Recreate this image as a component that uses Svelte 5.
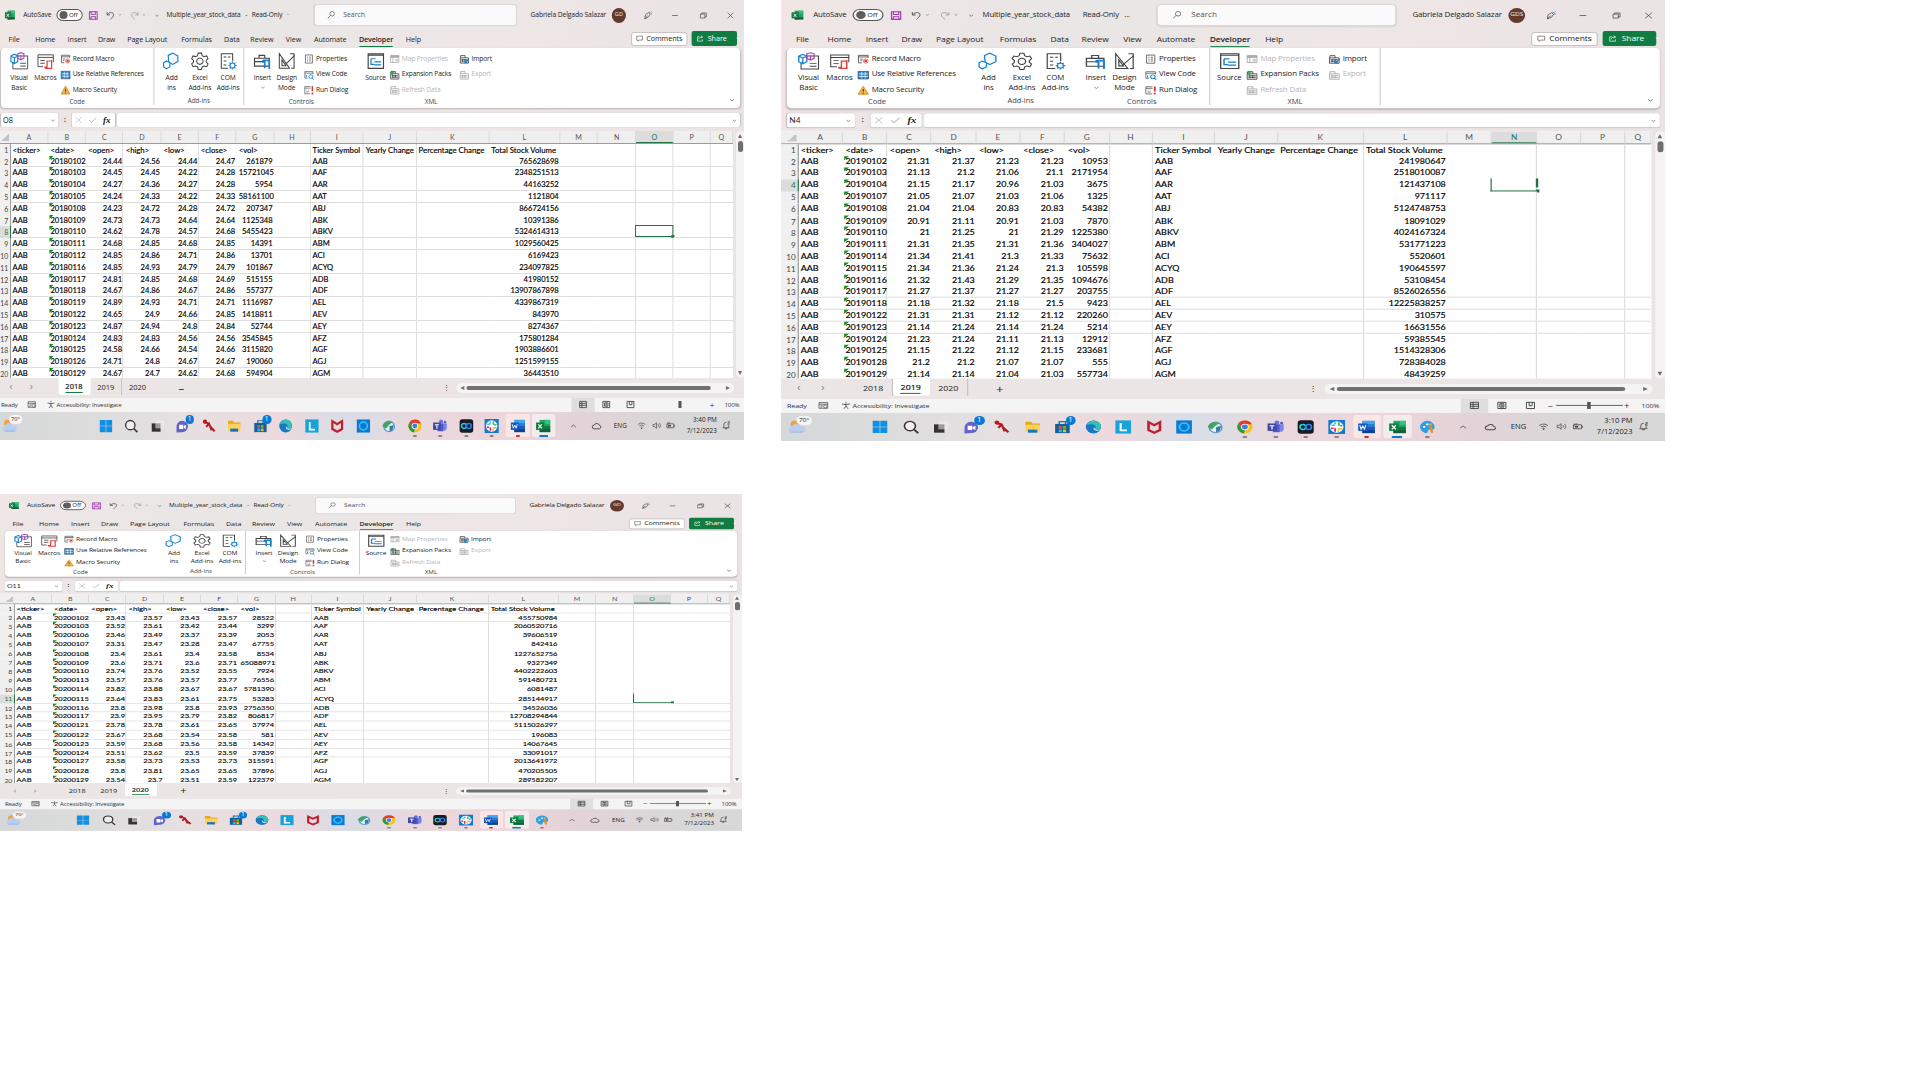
<script>
  const columns = [
    ['A', 37.5], ['B', 37.3], ['C', 37.2], ['D', 37.5], ['E', 37], ['F', 37.5], ['G', 37.1], ['H', 36.1],
    ['I', 52.6], ['J', 52.4], ['K', 72], ['L', 70.3], ['M', 37.3], ['N', 38], ['O', 36.7], ['P', 37], ['Q', 22]
  ].map(([name, width]) => ({ name, width }));
  const template = '14.5px ' + columns.map((c) => c.width + 'px').join(' ');

  const heads = ['<ticker>', '<date>', '<open>', '<high>', '<low>', '<close>', '<vol>', '', 'Ticker Symbol', 'Yearly Change', 'Percentage Change', 'Total Stock Volume'];

  const sheet2018 = `20180102 24.44 24.56 24.44 24.47 261879 AAB 765628698
20180103 24.45 24.45 24.22 24.28 15721045 AAF 2348251513
20180104 24.27 24.36 24.27 24.28 5954 AAR 44163252
20180105 24.24 24.33 24.22 24.33 58161100 AAT 1121804
20180108 24.23 24.72 24.28 24.72 207347 ABJ 866724156
20180109 24.73 24.73 24.64 24.64 1125348 ABK 10391386
20180110 24.62 24.78 24.57 24.68 5455423 ABKV 5324614313
20180111 24.68 24.85 24.68 24.85 14391 ABM 1029560425
20180112 24.85 24.86 24.71 24.86 13701 ACI 6169423
20180116 24.85 24.93 24.79 24.79 101867 ACYQ 234097825
20180117 24.81 24.85 24.68 24.69 515155 ADB 41980152
20180118 24.67 24.86 24.67 24.86 557377 ADF 13907867898
20180119 24.89 24.93 24.71 24.71 1116987 AEL 4339867319
20180122 24.65 24.9 24.66 24.85 1418811 AEV 843970
20180123 24.87 24.94 24.8 24.84 52744 AEY 8274367
20180124 24.83 24.83 24.56 24.56 3545845 AFZ 175801284
20180125 24.58 24.66 24.54 24.66 3115820 AGF 1903886601
20180126 24.71 24.8 24.67 24.67 190060 AGJ 1251599155
20180129 24.67 24.7 24.62 24.68 594904 AGM 36443510`;

  const sheet2019 = `20190102 21.31 21.37 21.23 21.23 10953 AAB 241980647
20190103 21.13 21.2 21.06 21.1 2171954 AAF 2518010087
20190104 21.15 21.17 20.96 21.03 3675 AAR 121437108
20190107 21.05 21.07 21.03 21.06 1325 AAT 971117
20190108 21.04 21.04 20.83 20.83 54382 ABJ 5124748753
20190109 20.91 21.11 20.91 21.03 7870 ABK 18091029
20190110 21 21.25 21 21.29 1225380 ABKV 4024167324
20190111 21.31 21.35 21.31 21.36 3404027 ABM 531771223
20190114 21.34 21.41 21.3 21.33 75632 ACI 5520601
20190115 21.34 21.36 21.24 21.3 105598 ACYQ 190645597
20190116 21.32 21.43 21.29 21.35 1094676 ADB 53108454
20190117 21.27 21.37 21.27 21.27 203755 ADF 8526026556
20190118 21.18 21.32 21.18 21.5 9423 AEL 12225838257
20190122 21.31 21.31 21.12 21.12 220260 AEV 310575
20190123 21.14 21.24 21.14 21.24 5214 AEY 16631556
20190124 21.23 21.24 21.11 21.13 12912 AFZ 59385545
20190125 21.15 21.22 21.12 21.15 233681 AGF 1514328306
20190128 21.2 21.2 21.07 21.07 555 AGJ 728384028
20190129 21.14 21.14 21.04 21.03 557734 AGM 48439259`;

  const sheet2020 = `20200102 23.43 23.57 23.43 23.57 28522 AAB 455750984
20200103 23.52 23.61 23.42 23.44 3299 AAF 2060520716
20200106 23.46 23.49 23.37 23.39 2053 AAR 39606519
20200107 23.31 23.47 23.28 23.47 67755 AAT 842416
20200108 23.4 23.61 23.4 23.58 8534 ABJ 1227652756
20200109 23.6 23.71 23.6 23.71 65088971 ABK 9327349
20200110 23.74 23.76 23.52 23.55 7924 ABKV 4402222603
20200113 23.57 23.76 23.57 23.77 76556 ABM 591480721
20200114 23.82 23.88 23.67 23.67 5781390 ACI 6081487
20200115 23.64 23.83 23.61 23.75 53283 ACYQ 285144917
20200116 23.8 23.98 23.8 23.93 2756350 ADB 34526036
20200117 23.9 23.95 23.79 23.82 806817 ADF 12708294844
20200121 23.78 23.78 23.61 23.65 37974 AEL 5115026297
20200122 23.67 23.68 23.54 23.58 581 AEV 196083
20200123 23.59 23.68 23.56 23.58 14342 AEY 14067645
20200124 23.51 23.62 23.5 23.59 37839 AFZ 33091017
20200127 23.58 23.73 23.53 23.73 315591 AGF 2013641972
20200128 23.8 23.81 23.65 23.65 37896 AGJ 470205505
20200129 23.54 23.7 23.51 23.59 122379 AGM 289582207`;

  const parse = (text) =>
    text.split('\n').map((line) => {
      const [date, open, high, low, close, vol, symbol, total] = line.split(' ');
      return ['AAB', date, open, high, low, close, vol, '', symbol, '', '', total];
    });

  const apps = ['start', 'search', 'taskview', 'chat', 'reader', 'folder', 'store', 'edge', 'lapp', 'shield', 'ring', 'globe', 'chrome', 'teams', 'webex', 'slack', 'word', 'excel'];

  const windows = [
    {
      id: 'w2018', width: 744, height: 440, sx: 1.0097, sy: 1, dx: -4.1, active: '2018', cell: 'O8', selCol: 'O', selRow: 8, box: 'full',
      rows: parse(sheet2018), v: 'CEHIJNOP', h: [2, 4, 5, 8, 9, 11, 13, 15, 16, 19], seps: [0, 1], avatar: 'GD',
      apps, time: '3:40 PM', add: '–', dividers: ['2019'], slider: false, dash: '-', shortTail: '·'
    },
    {
      id: 'w2019', width: 884, height: 441, sx: 1.1925, sy: 1.0023, dx: 0, active: '2019', cell: 'N4', selCol: 'N', selRow: 4, box: 'open',
      rows: parse(sheet2019), v: 'BGHKNP', h: [13, 14, 15, 16], seps: [2, 3], avatar: 'GDS',
      apps: [...apps, 'paint'], time: '3:10 PM', add: '+', dividers: ['2018', '2020'], slider: true, dash: ' ', shortTail: '...'
    },
    {
      id: 'w2020', width: 742, height: 337, sx: 1, sy: 0.7655, dx: 0, active: '2020', cell: 'O11', selCol: 'O', selRow: 11, box: 'ell',
      rows: parse(sheet2020), v: 'CGHIKMN', h: [1, 2, 11, 12, 13, 14, 15, 16, 17], seps: [1, 2], avatar: 'GD',
      apps: [...apps, 'paint'], time: '3:41 PM', add: '+', dividers: [], slider: true, dash: '-', shortTail: '·'
    }
  ];

  const tabs = [
    ['File', 26.5], ['Home', 32], ['Insert', 30], ['Draw', 29], ['Page Layout', 53.5], ['Formulas', 42.5], ['Data', 26],
    ['Review', 35], ['View', 28], ['Automate', 44.5], ['Developer', 46.5], ['Help', 30]
  ];

  const groups = [
    {
      label: 'Code', cls: 'g-code',
      big: [['vb', 'Visual', 'Basic'], ['macros', 'Macros', '']],
      lists: [[['record', 'Record Macro'], ['relref', 'Use Relative References'], ['warn', 'Macro Security']]]
    },
    { label: 'Add-ins', cls: 'g-addins', big: [['hex', 'Add', 'ins'], ['gear', 'Excel', 'Add-ins'], ['com', 'COM', 'Add-ins']], lists: [] },
    {
      label: 'Controls', cls: 'g-controls',
      big: [['toolbox', 'Insert', '⌄'], ['design', 'Design', 'Mode']],
      lists: [[['props', 'Properties'], ['code', 'View Code'], ['run', 'Run Dialog']]]
    },
    {
      label: 'XML', cls: 'g-xml', big: [['source', 'Source', '']],
      lists: [
        [['map', 'Map Properties', 1], ['pack', 'Expansion Packs'], ['refresh', 'Refresh Data', 1]],
        [['import', 'Import'], ['export', 'Export', 1]]
      ]
    }
  ];

  const s = (color, d, w = 1) => `<path d="${d}" fill="none" stroke="${color}" stroke-width="${w}"/>`;
  const f = (color, d) => `<path d="${d}" fill="${color}"/>`;
  const dark = '#444', blue = '#1683d0', gray = '#aaa';
  const pack = (c, extra) => s(c, 'M2 6V2.5h7V6M1.500 6h13v8.500h-13zM3 9h10M3 11.500h10M5 8v5M9 8v5', 1.3) + extra;

  // Every glyph is drawn in a 16 by 16 box.
  const icons = {
    excelLogo: f('#21a366', 'M4 1h11.500v14H4z') + f('#107c41', 'M4 8h5.800v7H4zM0 4h9v9H0z') + f('#33c481', 'M9.800 1h5.700v4.600H9.800z') + f('#185c37', 'M4 11.500h11.500V15H4z') + f('#107c41', 'M0 4h9v9H0z') + s('#fff', 'M2.500 6l4 5M6.500 6l-4 5', 1.3),
    save: s('#a23bb5', 'M1.200 1.200h13.600v13.600H1.200z', 1.8) + s('#a23bb5', 'M4 1v5h8V1M4 15v-5h8v5', 1.7),
    undo: s(dark, 'M2 2v5h5M2.500 6.500C6 1 14 2 13.500 7c-.3 3-3 5-5.500 8', 1.4),
    redo: s('#999', 'M14 2v5H9M13.500 6.500C10 1 2 2 2.500 7c.3 3 3 5 5.500 8', 1.3),
    magnify: s(dark, 'M14.500 5.500a4.500 4.500 0 1 1-9 0a4.500 4.500 0 1 1 9 0M6.500 9L1.500 14.500', 1.2),
    pen: s(dark, 'M3 14l1-7 5-4 3.500 3-3.500 5zM3 14l5-6', 1.2) + s(blue, 'M11 1l1 2.500M15.500 5.500l-2.500-1M13.500 2.500l1.500-1.500', 1.4),
    min: s(dark, 'M3 8h10', 1.2),
    restore: s(dark, 'M3 5.500h8v7H3zM5.500 5.500v-2h8v7H11', 1.2),
    close: s(dark, 'M3 3l10 10M13 3L3 13', 1.2),
    down: s(dark, 'M3 6l5 4.500L13 6', 1.8),
    comment: s(dark, 'M1.500 2.500h13v9H7l-3 3v-3H1.500z', 1.3),
    share: s('#fff', 'M7 4H2v10h11v-4M5 10c0-4 3-5.500 8-5.500M10 1.500l3.500 3-3.500 3', 1.4),
    vb: s(dark, 'M6 3.500h9.500v11.500h-13V9M9 10h5M9 12.500h5', .8) + s(blue, 'M.8 3.500l3-1.500 3 1.500v5l-3 1.800-3-1.800zM.8 3.500l3 1.800 3-1.800M3.800 5.300V10', 1) + s('#a54bb9', 'M6.800 1.500L9.500.6l2.700.9v4L9.500 7 6.800 5.500zM9.500 3v4', 1),
    macros: s(dark, 'M15 9V2.500H1.500v10.500H6M1.500 4.800H15M3.500 7.500h4M3.500 10h4', .8) + s('#e8403b', 'M13.500 7v7.500H7.500M14 8H9.500v5.500H7', 1.1),
    record: s(dark, 'M6 14H1.500V2h13v4M1.500 4.500h13M4 8h3M4 10.500h2', 1.2) + s('#d9413b', 'M14.500 11a3.300 3.300 0 1 1-6.600 0a3.300 3.300 0 1 1 6.600 0') + '<circle cx="11.200" cy="11" r="2" fill="#d9413b"/>',
    relref: f('#2b88cf', 'M1 2h14v12H1z') + s('#fff', 'M1.500 6h13M1.500 10h13M6 2v12M10.500 2v12') + s('#345', 'M1 2h14v12H1z'),
    warn: f('#f7b548', 'M8 1.500l7 13H1z') + s('#c97813', 'M8 1.500l7 13H1z') + s('#5a3700', 'M8 6v4.500M8 12v1.500', 1.5),
    hex: '<path d="M5 3l4-2 4.500 2.500v5L9 11 5.500 9z" fill="#fafafa" stroke="#1683d0" stroke-width="1"/><path d="M1 9.500L3.500 8l3 1.500v3.500L3.500 15 1 13.200z" fill="#fff" stroke="#1683d0" stroke-width="1"/>',
    gear: s(dark, 'M6.500 1h3l.5 2.200 1.700.9L14 3.500l1.200 2.400-1.600 1.600v1.500l1.600 1.600L14 13l-2.300-.6-1.700.9-.5 2.200h-3L6 13.300l-1.700-.9L2 13 .8 10.600 2.400 9V7.500L.8 5.900 2 3.500l2.300.6L6 3.200z', .9) + s(dark, 'M10.800 8.200a2.800 2.800 0 1 1-5.600 0a2.800 2.800 0 1 1 5.600 0', .9),
    com: s(dark, 'M12 8V1.500H2v13h6M4 4.500h2.500M4 8h2.500M8 4.500h2M4 11.500h2.500', .9) + s(blue, 'M14 12a2.200 2.200 0 1 1-4.400 0a2.200 2.200 0 1 1 4.400 0M11.800 8.500v1.300M11.800 14.200v1.300M8.300 12h1.300M14 12h1.500M9.300 9.500l1 1M13.400 13.500l1 1M14.300 9.500l-1 1M9.300 14.500l1-1', 1),
    toolbox: s(dark, 'M1 5.500h13v7H1zM5 5.500V3h5v2.500M1 8.500h8', 1) + s(blue, 'M8.500 7.500h6M10 7.500v7M14 7v8M8.500 9.500V7', 1.5),
    design: s(dark, 'M1.500 1.500v13h9zM3.800 7v5.200h3.500zM11 1.500h3.500v13H12', .9) + s(dark, 'M15 3l-8 8', .9),
    props: s(dark, 'M2.500 1.500h11v13h-11zM5 5h1.500M8 5h3M5 8h1.500M8 8h3M5 11h1.500M8 11h3', 1.1),
    code: s(dark, 'M1.500 13V2.500h13V7M1.500 5h13M1.500 13H6', 1) + s(blue, 'M14 10.500a3 3 0 1 1-6 0a3 3 0 1 1 6 0M13 13l2.500 2.500M4 8v4', 1.4),
    run: s(dark, 'M10 14H1.500V2.500h9M1.500 5h9M4 8h1M7 8h1M4 11h4', 1) + s('#d9333b', 'M13.500 2v8M13.500 12v3', 2.4),
    source: s(dark, 'M1.500 1.500h13.500v13H1.500zM1.500 2.800h13.500', 1) + s(blue, 'M4 6h4M4 6v5h3M7 8.800h6M7 11.500h6', 1.1),
    map: s(gray, 'M1.500 2.500h13v11h-13zM1.500 5.500h13M5 6v8M9 9h4M9 11h4', 1.3) + f(gray, 'M1 2h14v3H1z'),
    pack: pack(dark, s('#2f9e4f', 'M4 1v7M.5 4.500h7', 1.8)),
    refresh: pack(gray, ''),
    import: pack(dark, s(blue, 'M15 8l-6 6M9 10v4h4', 1.7)),
    export: pack(gray, ''),
    access: s(dark, 'M8 4.500V9l-3 5M8 9l3 5M2 5.500l6 1 6-1M8 1.500v2', 1.3),
    macroRec: s(dark, 'M1.500 3h13v10h-13zM1.500 6h13M4 9h4M4 11h2', 1.2) + '<circle cx="11" cy="10" r="2.500" fill="none" stroke="#444"/>',
    normal: s('#333', 'M2 2.500h12v11H2zM2 6h12M2 9.500h12M6 2.500v11', 1.3),
    layout: s('#333', 'M2 2.500h12v11H2zM5 5h6v6H5zM6.500 7h3M6.500 9h3', 1.4),
    pbreak: s('#333', 'M2 2.500h12v11H2zM6 2.500v6h4.500v-6', 1.4),
    weather: '<circle cx="6" cy="5.500" r="3.800" fill="#f2a044"/>' + f('#b9cdee', 'M3 14.500a3.200 3.200 0 0 1 0-6.200A4.700 4.700 0 0 1 11.600 8a3.300 3.300 0 0 1 1.400 6.500z') + f('#90aee0', 'M2 13.500h12l-1 1H3z'),
    start: f('#1190e3', 'M1 1h6.700v6.700H1zM8.300 1H15v6.700H8.300zM1 8.300h6.700V15H1zM8.300 8.300H15V15H8.300z'),
    search: '<circle cx="7" cy="7" r="5.300" fill="#f4eded" stroke="#333" stroke-width="1.500"/>' + s('#333', 'M11 11l4 4', 1.700),
    taskview: f('#333', 'M1.500 5h10v9.500h-10z') + f('#e8e8e8', 'M6 1.500h9.500v9H6z') + f('#999', 'M6 5h5.500v5.500H6z'),
    chat: f('#6264c8', 'M1 9a6.500 6.500 0 1 1 6.500 6L1 15.500z') + f('#fff', 'M4 6.500h4.500v5H4zM9 8l2.500-1.500v5L9 10z'),
    reader: s('#b5171c', 'M2 3.500L8 5l3 8M8 5L5 9M8.500 7.500L14.500 14', 2.200) + '<circle cx="3.500" cy="3" r="2.300" fill="#c3161c"/>',
    folder: f('#e9a81c', 'M1 2h5.500l1.500 2h7v4H1z') + f('#ffd35a', 'M1 5.500h14V14H1z') + f('#1775c0', 'M3.500 11h9v3.500h-9z'),
    store: f('#155f9c', 'M1 4.500h14V15H1z') + s('#1c76bb', 'M5 4.500V2h6v2.500', 1.400) + f('#f25022', 'M4.500 7H7.500v3h-3z') + f('#7fba00', 'M8.500 7h3v3h-3z') + f('#29b6f6', 'M4.500 11h3v3h-3z') + f('#ffb900', 'M8.500 11h3v3h-3z'),
    edge: '<circle cx="8" cy="8" r="7.300" fill="#1778c6"/>' + f('#35c1b0', 'M1.500 5.500C4-1 14-.5 15.300 7c.3 3.500-3.500 4.500-6 3.200 2-2.200.5-5.200-3-5.200-2 0-3.800.7-4.800.5z') + f('#e9f4f7', 'M9 10.200c2 1.500 4.500.8 5.500 0-1 2-3.500 2.600-5.500 1.300-1.500-1-.8-2.500 0-3.300z'),
    lapp: f('#17a5d8', 'M.5.500h15v15H.5z') + s('#fff', 'M5.500 3.500v8.500h6', 2),
    shield: s('#c0202c', 'M2.500 2.500v9L8 14.500l5.500-3v-9L8 6z', 2.500),
    ring: f('#0a78d4', 'M.5.500h15v15H.5z') + '<circle cx="8" cy="8" r="4.500" fill="none" stroke="#38c3f7" stroke-width="1.800"/>',
    globe: '<circle cx="8.500" cy="8.500" r="6" fill="#e4f1f4" stroke="#5ea1c4" stroke-width="1.500"/>' + f('#44a362', 'M1 8c1-5 7-7 11-4L8 7l-3 4z') + f('#317ba8', 'M9 8l5-1-2 6-3 1z'),
    chrome: '<circle cx="8" cy="8" r="7.400" fill="#fbc116"/>' + f('#e33b2e', 'M1.600 4.300A7.400 7.400 0 0 1 14.800 5H8l-3 4z') + f('#279847', 'M1.600 4.300L5.500 10 8 11.500 7 15.300A7.400 7.400 0 0 1 1.600 4.300z') + '<circle cx="8" cy="8" r="3.600" fill="#fff"/><circle cx="8" cy="8" r="2.800" fill="#3b7de8"/>',
    teams: f('#7b83eb', 'M8 5h7.500v5a3.500 3.500 0 0 1-7 0z') + f('#5059c9', 'M5 5h6.500v9H5z') + '<circle cx="9" cy="3" r="2.300" fill="#6b73db"/><circle cx="13.500" cy="3.500" r="1.500" fill="#5059c9"/>' + f('#4048a8', 'M0 4h8.500v8.500H0z') + s('#fff', 'M2 6.500h4.500M4.300 6.500V11', 1.200),
    webex: '<rect x=".3" y=".3" width="15.400" height="15.400" rx="3" fill="#171b22"/><circle cx="5.300" cy="8" r="2.800" fill="none" stroke="#27c7d6" stroke-width="1.700"/><circle cx="10.700" cy="8" r="2.800" fill="none" stroke="#2c7df0" stroke-width="1.700"/>',
    slack: f('#1379cf', 'M0 0h16v16H0z') + '<circle cx="8" cy="8" r="6.500" fill="#fff"/>' + s('#36c5f0', 'M3 6h3.500M6.500 2.500V5', 1.700) + s('#2eb67d', 'M10 2.500v4M11 6.500h2.500', 1.700) + s('#ecb22e', 'M9.500 10h4M9.500 11v2.500', 1.700) + s('#e01e5a', 'M6.500 9.500v4M2.500 9.500H5', 1.700),
    word: f('#2b7cd3', 'M4 1h12v14H4z') + f('#41a5ee', 'M4 1h12v3.700H4z') + f('#185abd', 'M4 8h12v3.500H4z') + f('#103f91', 'M4 11.500h12V15H4z') + f('#185abd', 'M0 4h9v8.500H0z') + s('#fff', 'M1.500 6l1.300 4.500L4.400 7 6 10.500 7.300 6', 1),
    excel: f('#21a366', 'M4 1h12v14H4z') + f('#33c481', 'M10 1h6v4.600h-6z') + f('#107c41', 'M4 8h12v3.500H4z') + f('#185c37', 'M4 11.500h12V15H4z') + f('#107c41', 'M0 4h9v8.500H0z') + s('#fff', 'M2.500 6l4 4.800M6.500 6l-4 4.800', 1.300),
    paint: f('#2e9fe0', 'M1 8a7 7 0 0 1 14 0c0 4-3 2.500-5 3s-1 4-3 4-6-3-6-7z') + f('#e38a2e', 'M9.500 7l3-1 1 8.500h-2z') + f('#fff', 'M4 7h2v2H4zM7 4h2v2H7z') + f('#f2c12e', 'M10 4h2v2h-2z'),
    up: s(dark, 'M3 10.500L8 6l5 4.500', 1.400),
    cloud: s(dark, 'M4 12.500a3 3 0 0 1 0-6A4.500 4.500 0 0 1 12.300 7a2.800 2.800 0 0 1 0 5.500z', 1.400),
    wifi: s(dark, 'M1.500 6.500c4-3.600 9-3.600 13 0M4 9c2.500-2 5.500-2 8 0M6.500 11.500c1-1 2-1 3 0', 1.300) + '<circle cx="8" cy="13" r="1.200" fill="#444"/>',
    sound: s(dark, 'M1.500 6h3l3-3v10l-3-3h-3zM10 5.500c1.500 1.500 1.500 3.500 0 5M12.500 3.500c2.500 2.500 2.500 6.500 0 9', 1.200),
    battery: s(dark, 'M1 5h12v7H1zM14.500 7v3', 1.300) + f(dark, 'M3 7h5v3H3z') + s(dark, 'M3 2v4M6 2v3', 1.300),
    bell: s(dark, 'M2 12h11L11.500 9.500V7M2 12l1.500-2.500V6.500A4 4 0 0 1 8 2.500M6 12v2h3v-2M10 1.500h4l-4 4h4', 1.300)
  };
</script>

{#snippet icon(name, size = '')}
  <svg class="icon {size}" viewBox="0 0 16 16" aria-hidden="true">{@html icons[name]}</svg>
{/snippet}

<main>
  {#each windows as w (w.id)}
    <section class="slot" style:width="{w.width}px" style:height="{w.height}px">
      <div class="window" style:transform="translateX({w.dx}px) scale({w.sx}, {w.sy})">
        <header class="title">
          <div class="left">
            {@render icon('excelLogo', 's10')}
            <span class="autosave">AutoSave</span>
            <span class="toggle"><i></i><b>Off</b></span>
            {@render icon('save', 's9')}
            <span class="history">{@render icon('undo', 's9')}{@render icon('down', 's4')}</span>
            <span class="history">{@render icon('redo', 's9')}{@render icon('down', 's4')}</span>
            {@render icon('down', 's5')}
          </div>
          <div class="doc"><span>Multiple_year_stock_data</span><span>{w.dash}</span><span>Read-Only</span><span>{w.shortTail}</span></div>
          <div class="searchbox">{@render icon('magnify', 's8')}<span>Search</span></div>
          <span class="user">Gabriela Delgado Salazar</span>
          <span class="avatar">{w.avatar}</span>
          <div class="winbuttons">
            {@render icon('pen', 's9')}{@render icon('min', 's9')}{@render icon('restore', 's9')}{@render icon('close', 's9')}
          </div>
        </header>

        <nav class="tabs">
          {#each tabs as [label, width]}
            <span class="tab" class:current={label === 'Developer'} style:width="{width}px"><em>{label}</em></span>
          {/each}
          <span class="comments">{@render icon('comment', 's7')}Comments</span>
          <span class="share">{@render icon('share', 's7')}Share<i>⌄</i></span>
        </nav>

        <div class="ribbon">
          {#each groups as g, i}
            <div class="group {g.cls}" class:sep={w.seps.includes(i)}>
              <div class="tools">
                {#each g.big as [name, first, second]}
                  <div class="big">
                    {@render icon(name, 's18')}
                    <span>{first}</span>
                    {#if second === '⌄'}{@render icon('down', 's5')}{:else}<span>{second}</span>{/if}
                  </div>
                {/each}
                {#each g.lists as list}
                  <div class="list">
                    {#each list as [name, label, off]}
                      <div class="small" class:off>{@render icon(name, 's10')}<span>{label}</span></div>
                    {/each}
                  </div>
                {/each}
              </div>
              <div class="caption">{g.label}</div>
            </div>
          {/each}
          <div class="collapse">{@render icon('down', 's6')}</div>
        </div>

        <div class="formula">
          <div class="name"><span>{w.cell}</span>{@render icon('down', 's5')}</div>
          <span class="colon">:</span>
          <div class="fx">
            <svg class="icon s8" viewBox="0 0 16 16"><path d="M2 2l12 12M14 2L2 14" fill="none" stroke="#b5b5b5" stroke-width="1.500" /></svg>
            <svg class="icon s8" viewBox="0 0 16 16"><path d="M1 8l4 5L15 3" fill="none" stroke="#b5b5b5" stroke-width="1.700" /></svg>
            <i>fx</i>
          </div>
          <div class="input">{@render icon('down', 's5')}</div>
        </div>

        <div class="sheet">
          <div class="cells">
            <div class="row head" style:grid-template-columns={template}>
              <span class="corner"></span>
              {#each columns as c}
                <span class="colname" class:on={c.name === w.selCol}>{c.name}</span>
              {/each}
            </div>
            {#each [heads, ...w.rows] as row, r}
              <div class="row" class:labels={r === 0} style:grid-template-columns={template}>
                <span class="rownum" class:on={r + 1 === w.selRow}>{r + 1}</span>
                {#each columns as c, i}
                  <span
                    class="cell"
                    class:v={w.v.includes(c.name)}
                    class:h={w.h.includes(r + 1)}
                    class:num={r > 0 && i > 1 && i !== 8}
                    class:date={r > 0 && i === 1}
                  >{row[i] ?? ''}{#if c.name === w.selCol && r + 1 === w.selRow}<i class="selection {w.box}"></i>{/if}</span>
                {/each}
              </div>
            {/each}
          </div>
          <div class="vbar"><i class="tri up"></i><i class="thumb"></i><i class="tri dn"></i></div>
        </div>

        <div class="sheetbar">
          <span class="arrow">‹</span><span class="arrow">›</span>
          <div class="names">
            {#each ['2018', '2019', '2020'] as year}
              <span class="year" class:active={year === w.active} class:divider={w.dividers.includes(year)}><em>{year}</em></span>
            {/each}
          </div>
          <span class="plus">{w.add}</span>
          <span class="dots">⋮</span>
          <div class="hbar"><i class="tri lf"></i><i class="thumb"></i><i class="tri rt"></i></div>
        </div>

        <div class="status">
          <span class="ready">Ready</span>
          {@render icon('macroRec', 's9')}
          <span class="acc">{@render icon('access', 's9')}Accessibility: Investigate</span>
          <span class="views">
            <b class="picked">{@render icon('normal', 's9')}</b><b>{@render icon('layout', 's9')}</b><b>{@render icon('pbreak', 's9')}</b>
          </span>
          <span class="zoom"><u>{w.slider ? '−' : ''}</u><span class="track" class:bare={!w.slider}><i></i></span><u>+</u></span>
          <span class="pct">100%</span>
        </div>

        <footer class="taskbar">
          <div class="weather">{@render icon('weather', 's15')}<span>70°</span></div>
          <div class="apps">
            {#each w.apps as app}
              <div class="app a-{app}" class:word={app === 'word'} class:excel={app === 'excel'}>
                {@render icon(app, 's14')}
                {#if app === 'chat' || app === 'store'}<sup>1</sup>{/if}
                {#if ['chrome', 'teams', 'webex', 'slack', 'word', 'excel', 'paint'].includes(app)}<i></i>{/if}
              </div>
            {/each}
          </div>
          <div class="tray">
            {@render icon('up', 's8')}{@render icon('cloud', 's10')}<span>ENG</span>
            <div class="net">{@render icon('wifi', 's9')}{@render icon('sound', 's9')}{@render icon('battery', 's9')}</div>
            <div class="clock"><span>{w.time}</span><span>7/12/2023</span></div>
            {@render icon('bell', 's9')}
          </div>
        </footer>
      </div>
    </section>
  {/each}
</main>

<style>
  :global(body) { background: #fff; }
  main {
    display: grid;
    grid-template-columns: 781px 884px;
    grid-template-rows: 494px 337px;
    width: 1920px;
    height: 1080px;
    overflow: hidden;
    font-family: 'Open Sans', 'Noto Sans', sans-serif;
    color: #222;
  }
  main *, main *::before { box-sizing: border-box; }
  .slot { overflow: hidden; }
  .window {
    display: flex;
    flex-direction: column;
    width: 742px;
    height: 440px;
    transform-origin: 0 0;
    background: linear-gradient(100deg, #f0e6e6, #e9e6e6 30%, #efe6e6 60%, #e9e3e3);
    font-size: 6.6px;
    white-space: nowrap;
    line-height: 1;
  }
  .icon { display: block; flex: none; overflow: visible; }
  .s4 { width: 3.5px; height: 3.5px; }
  .s5 { width: 5px; height: 5px; }
  .s6 { width: 6px; height: 6px; }
  .s7 { width: 7px; height: 7px; }
  .s8 { width: 8px; height: 8px; }
  .s9 { width: 9px; height: 9px; }
  .s10 { width: 10px; height: 10px; }
  .s14 { width: 14px; height: 14px; }
  .s15 { width: 15px; height: 15px; }
  .s18 { width: 18px; height: 18px; }

  .title { display: flex; align-items: center; height: 30px; padding-left: 9px; flex: none; }
  .left { display: flex; align-items: center; width: 160px; }
  .autosave { width: 41px; padding-left: 8px; letter-spacing: -0.1px; }
  .toggle {
    display: flex; align-items: center; justify-content: space-between; width: 26px; height: 11.5px; margin-right: 6px;
    padding: 0 4px 0 2px; border: 1px solid #555; border-radius: 6px; background: #fff;
  }
  .toggle i { width: 8px; height: 8px; border-radius: 50%; background: #5d5d5d; }
  .toggle b { font-weight: 400; font-size: 6px; }
  .history { display: flex; align-items: center; gap: 3px; margin-left: 8px; }
  .left > :global(.s5) { margin-left: 9px; }
  .doc { display: flex; gap: 4.5px; width: 147px; font-size: 6.5px; letter-spacing: -0.1px; white-space: pre; }
  .searchbox {
    display: flex; align-items: center; gap: 8px; width: 199px; height: 20px; padding-left: 12px; border-radius: 3px;
    background: #fafafa; box-shadow: 0 0 1px 1px #ddd6d6; color: #555; font-size: 6.8px;
  }
  .user { width: 95px; padding-left: 14.5px; font-size: 6.7px; letter-spacing: -0.12px; }
  .avatar {
    display: flex; align-items: center; justify-content: center; width: 14px; height: 15px; border-radius: 50%;
    background: #643a2e; color: #eee; font-size: 5.5px;
  }
  .winbuttons { display: flex; gap: 18.5px; margin-left: 16.5px; }

  .tabs { display: flex; align-items: center; height: 18px; padding-left: 12.5px; flex: none; font-size: 7.1px; letter-spacing: -0.05px; }
  .tab { flex: none; }
  .tab em { display: inline-block; padding: 5px 0 4px; font-style: normal; }
  .current em { border-bottom: 1.5px solid #107c41; padding-bottom: 2.5px; font-weight: 600; letter-spacing: -0.12px; }
  .comments {
    display: flex; align-items: center; justify-content: center; gap: 3px; flex: none; width: 56px; height: 14px; margin: -1px 4px 0 auto;
    border: 1px solid #c9c4c4; border-radius: 3px; background: #fff;
  }
  .share {
    display: flex; align-items: center; gap: 4px; flex: none; width: 45px; height: 14.5px; margin: -1px 8px 0 0; padding-left: 5px;
    border-radius: 2px; background: #107c41; color: #fff;
  }
  .share i { margin: -3px 0 0 4px; font-style: normal; }

  .ribbon { display: flex; height: 60px; margin: 0 5px; flex: none; border-radius: 4px; background: #fff; box-shadow: 0 1px 2px #b9b1b1; }
  .group { display: flex; flex-direction: column; flex: none; border-right: 1px solid transparent; padding-top: 3px; height: 57px; }
  .sep { border-right-color: #cfcfcf; }
  .g-code { width: 152px; }
  .g-addins { width: 89px; }
  .g-controls { width: 114px; }
  .g-xml { width: 143px; }
  .tools { display: flex; height: 47.5px; }
  .g-code .tools { padding-left: 5px; }
  .g-addins .tools { padding-left: 3px; }
  .g-controls .tools { padding-left: 6px; }
  .g-xml .tools { padding-left: 2px; }
  .big { display: flex; flex-direction: column; align-items: center; flex: none; width: 26px; padding-top: 1px; line-height: 9.5px; }
  .big span { height: 9.5px; letter-spacing: -0.1px; }
  .big span:first-of-type { padding-top: 3px; height: 12.5px; }
  .big > :global(.s5) { margin-top: 2px; }
  .g-addins .big { width: 28px; }
  .g-controls .big { width: 24px; }
  .g-controls .list { margin-left: 3px; }
  .g-xml .big { width: 28px; }
  .list { flex: none; width: 69px; padding-left: 2px; }
  .g-xml .list { padding-left: 0; }
  .small { display: flex; align-items: center; gap: 2px; height: 15.7px; font-size: 6.6px; letter-spacing: -0.12px; }
  .off { color: #b5b5b5; }
  .caption { height: 8px; text-align: center; color: #444; font-size: 6.3px; line-height: 8px; }
  .collapse { display: flex; align-items: flex-end; margin-left: auto; padding: 0 5px 5px 0; }

  .formula { display: flex; align-items: center; height: 14px; margin: 5px 5px 4px; flex: none; }
  .name {
    display: flex; align-items: center; justify-content: space-between; width: 57px; height: 14px; padding: 0 3px 0 2px;
    border-radius: 2px; background: #fff; font: 7px 'Lato', sans-serif; box-shadow: 0 0 1px #bbb;
  }
  .colon { width: 13px; text-align: center; font-weight: 700; }
  .fx { display: flex; align-items: center; gap: 6px; width: 42.5px; height: 14px; padding-left: 3px; border-radius: 2px; background: #fff; box-shadow: 0 0 1px #bbb; }
  .fx i { font: italic 700 9px 'Liberation Serif', serif; }
  .input { display: flex; align-items: center; justify-content: flex-end; flex: 1; height: 14px; margin-left: 2px; padding-right: 3px; border-radius: 2px; background: #fff; box-shadow: 0 0 1px #bbb; }

  .sheet { display: flex; height: 247px; flex: none; overflow: hidden; }
  .cells { width: 730px; background: #fff; overflow: hidden; flex: none; }
  .row { display: grid; height: 11.8px; font: 7.5px/12.4px 'Lato', sans-serif; color: #000; }
  .labels { font-size: 7.7px; }
  .head { height: 12.8px; background: #efefef; border-bottom: 1px solid #9b9b9b; color: #555; text-align: center; font-size: 7px; line-height: 13px; }
  .colname { border-right: 1px solid #dadada; overflow: hidden; }
  .colname.on { background: #dcdcdc; color: #217346; border-bottom: 1.5px solid #217346; }
  .corner { background: linear-gradient(135deg, #efefef 60%, #c4c4c4 60%); margin: 2px; }
  .rownum { background: #f0f0f0; border-right: 1px solid #9b9b9b; color: #444; text-align: right; padding-right: 1.2px; font-size: 6.8px; }
  .rownum.on { background: #dcdcdc; color: #217346; border-right: 1.5px solid #217346; }
  .cell { position: relative; padding-left: 2px; height: 11.8px; border: 0 solid #dedede; -webkit-text-stroke: 0.15px #000; }
  .cell.v { border-right-width: 1px; }
  .cell.h { border-bottom-width: 1px; }
  .cell.num { text-align: right; padding-right: 1.5px; }
  .cell.num.v { padding-right: 0.5px; }
  .cell.date::before { content: ''; position: absolute; left: 0.5px; top: 0; border-top: 4px solid #0f8a1d; border-right: 4px solid transparent; }
  .selection { position: absolute; inset: -1px -1px 0 -1px; border: 1.3px solid #217346; }
  .selection::after { content: ''; position: absolute; right: -2px; bottom: -2px; width: 3px; height: 3px; background: #217346; }
  .selection.open, .selection.ell { border-top: 0; border-right: 0; }
  .selection.open::before { content: ''; position: absolute; right: -1px; top: 0; width: 2.5px; height: 9px; background: #217346; }

  .vbar { display: flex; flex-direction: column; align-items: center; width: 9px; margin-left: 2.5px; padding: 3px 0; border-radius: 5px; background: #f4f2f2; }
  .tri { width: 0; height: 0; border: 2.8px solid transparent; }
  .tri.up { border-top: 0; border-bottom: 4px solid #6d6d6d; }
  .tri.dn { border-bottom: 0; border-top: 4px solid #6d6d6d; margin-top: auto; }
  .tri.lf { border-left: 0; border-right: 4px solid #6d6d6d; }
  .tri.rt { border-right: 0; border-left: 4px solid #6d6d6d; }
  .vbar .thumb { width: 5px; height: 11px; margin-top: 3px; border-radius: 2.5px; background: #6f6f6f; }

  .sheetbar { display: flex; align-items: center; height: 19.5px; flex: none; padding-left: 5px; font-size: 7.4px; background: #ebe5e6; }
  .arrow { width: 20px; text-align: center; color: #888; font-size: 10px; margin-top: -3px; }
  .names { display: flex; align-self: stretch; margin-left: 17px; }
  .year { display: flex; justify-content: center; width: 31.5px; height: 17px; border-right: 1px solid transparent; }
  .year em { font-style: normal; padding-top: 6px; height: 15px; }
  .year.active { background: #fff; border-radius: 0 0 3px 3px; }
  .year.active em { border-bottom: 1.3px solid #107c41; color: #111; padding-top: 4.5px; -webkit-text-stroke: 0.2px #222; }
  .year.divider { border-right-color: #c8c2c2; border-radius: 0; }
  .plus { width: 20px; margin-left: 17px; text-align: center; font-size: 11px; }
  .dots { margin-left: auto; width: 6px; margin-right: 7px; font-size: 6.5px; text-align: center; }
  .hbar { display: flex; align-items: center; gap: 2px; width: 275px; height: 10px; margin-right: 11px; padding: 0 4px; border-radius: 5px; background: #f5f3f3; }
  .hbar .thumb { width: 242px; height: 4px; border-radius: 2px; background: #707070; }
  .hbar .rt { margin-left: auto; }

  .status { display: flex; align-items: center; height: 14px; flex: none; padding-left: 5px; background: #f4f4f4; font-size: 6px; letter-spacing: -0.1px; color: #333; }
  .ready { width: 26px; }
  .acc { display: flex; align-items: center; gap: 1.5px; margin-left: 9.5px; }
  .views { display: flex; margin-left: auto; align-self: stretch; }
  .views b { display: flex; align-items: center; justify-content: center; width: 23.5px; }
  .views .picked { background: #dedede; }
  .zoom { display: flex; align-items: center; width: 70px; margin-left: 2px; justify-content: space-between; padding-left: 1px; font-size: 8px; }
  .zoom u { width: 5px; text-decoration: none; }
  .track { display: flex; justify-content: center; align-items: center; width: 56px; height: 1.3px; background: #666; }
  .track.bare { background: none; }
  .track i { width: 3px; height: 6.5px; background: #555; }
  .pct { width: 30px; text-align: center; padding-left: 4px; }

  .taskbar {
    display: flex; align-items: center; flex: 1; min-height: 0;
    background: linear-gradient(90deg, #d5d8d9, #dedddd 14%, #e5e0e1 24%, #ecd9dd 38%, #d9dde6 47%, #e9d8dd 56%, #eed5da 68%, #e2d3d8 78%, #d8d8d9 92%);
  }
  .weather { position: relative; display: flex; flex: none; width: 46px; padding-left: 6px; }
  .weather span { position: absolute; left: 13px; top: -3px; padding: 1.5px 2px; border-radius: 5px; background: #f6f4f4; font-size: 5.5px; }
  .apps { display: flex; justify-content: flex-end; flex: none; width: 509px; }
  .app { position: relative; display: flex; align-items: center; justify-content: center; flex: none; width: 25.5px; height: 25px; border-radius: 3px; }
  .word, .excel { background: content-box #fbe6e6; padding: 1px; }
  .excel { background: content-box #f3ecec; }
  .app sup { position: absolute; right: 2px; top: 2px; width: 8.5px; height: 8.5px; border-radius: 50%; background: #0a78d4; color: #fff; font-size: 6.5px; line-height: 8.5px; text-align: center; }
  .app i { position: absolute; bottom: 1px; left: 50%; width: 4px; height: 1.8px; margin-left: -2px; border-radius: 1px; background: #8b8285; }
  .app.word i { background: #c33030; }
  .app.excel i { width: 9px; margin-left: -4.5px; background: #0a78d4; }
  .tray { display: flex; align-items: center; flex: none; margin-left: 13px; font-size: 6.3px; }
  .tray > span { margin-left: 12px; width: 23px; }
  .tray > :global(.s10) { margin-left: 14px; }
  .net { display: flex; gap: 5.5px; }
  .clock { display: flex; flex-direction: column; gap: 4px; width: 41px; align-items: flex-end; margin-right: 5px; font-size: 6.3px; }
</style>
